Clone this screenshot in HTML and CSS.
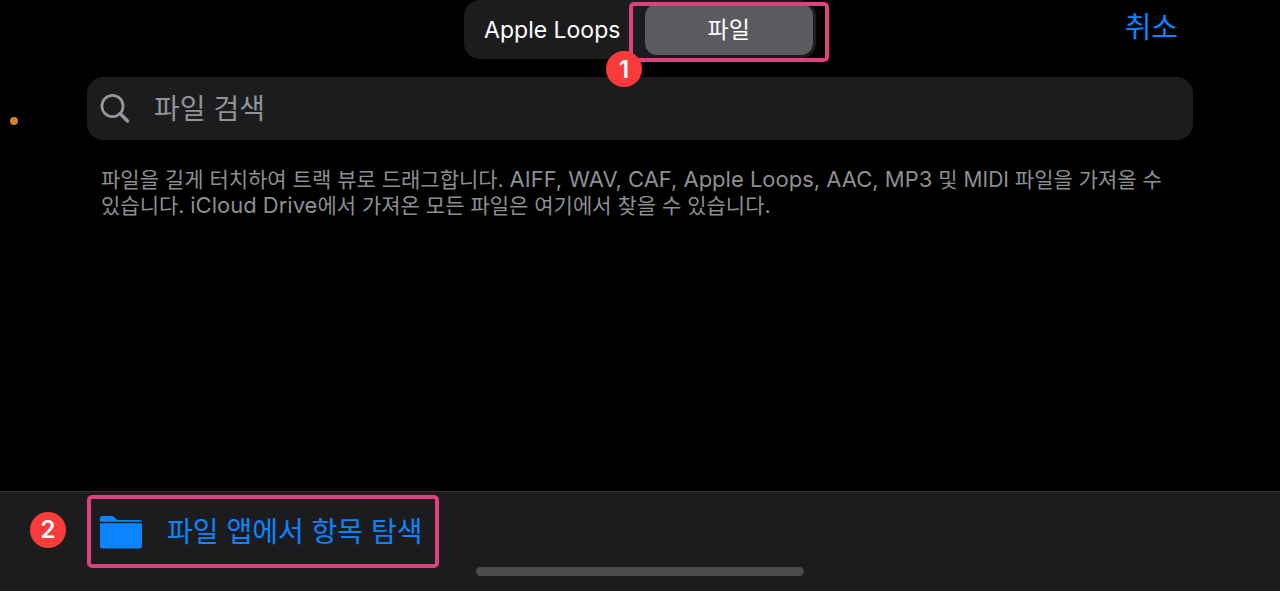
FILE: index.html
```html
<!DOCTYPE html>
<html lang="ko">
<head>
<meta charset="utf-8">
<meta name="viewport" content="width=device-width, initial-scale=1">
<title>파일</title>
<link rel="stylesheet" href="styles.css">
</head>
<body>
<header class="topbar">
  <div class="segments">
    <button class="segment" type="button" aria-pressed="false">Apple Loops</button>
    <button class="segment segment-active" type="button" aria-pressed="true">파일</button>
    <span class="highlight highlight-tab"></span>
    <span class="badge badge-tab">1</span>
  </div>
  <button class="cancel" type="button">취소</button>
</header>
<main class="content">
  <label class="search">
    <svg class="search-icon" viewBox="0 0 30 30" aria-hidden="true">
      <circle cx="12.500" cy="12" r="10.600" fill="none" stroke="currentColor" stroke-width="2.700"/>
      <path d="M20.300 19.800 27.500 27" stroke="currentColor" stroke-width="3.500" stroke-linecap="round"/>
    </svg>
    <input class="search-input" type="search" placeholder="파일 검색" aria-label="파일 검색">
  </label>
  <span class="status-dot"></span>
  <p class="hint">파일을 길게 터치하여 트랙 뷰로 드래그합니다. <span class="latin">AIFF, WAV, CAF, Apple Loops, AAC, MP3</span> 및 MIDI 파일을 가져올 수 있습니다. <span class="latin">iCloud Drive</span>에서 가져온 모든 파일은 여기에서 찾을 수 있습니다.</p>
</main>
<footer class="bottombar">
  <div class="browse-row">
    <span class="badge badge-browse">2</span>
    <button class="browse" type="button">
      <svg class="folder-icon" viewBox="0 0 44 34" aria-hidden="true">
        <path d="M1 6.800V3Q1 1 3 1H12.500Q14 1 15 2L17 4Q18 5 19.500 5H41Q43 5 43 6.800Z" fill="currentColor"/>
        <path d="M1 8.200H43V31Q43 33.500 40.500 33.500H3.500Q1 33.500 1 31Z" fill="currentColor"/>
      </svg>
      <span class="browse-label">파일 앱에서 항목 탐색</span>
    </button>
  </div>
  <div class="home-indicator"></div>
</footer>
</body>
</html>
```
FILE: styles.css
```css
* {
  box-sizing: border-box;
}

body {
  margin: 0;
  min-height: 100vh;
  display: flex;
  flex-direction: column;
  background: #000;
  color: #fff;
  font-family: Inter, "Noto Sans CJK KR", sans-serif;
}

button {
  border: 0;
  background: none;
  color: inherit;
  font: inherit;
  padding: 0;
  cursor: pointer;
}

.topbar {
  display: grid;
  grid-template-columns: 1fr 352px 1fr;
  padding: 0 102px;
}

.segments {
  grid-column: 2;
  position: relative;
  display: grid;
  grid-template-columns: 1fr 1fr;
  height: 59px;
  padding: 4px 3px 4px 4px;
  gap: 8px;
  border-radius: 16px;
  background: #1c1c1e;
  font-size: 23px;
}

.segment {
  border-radius: 12px;
  white-space: nowrap;
}

.segment-active {
  padding-bottom: 4px;
  background: #5b5b5f;
}

.highlight {
  position: absolute;
  border: 4px solid #df4080;
  border-radius: 5px;
  pointer-events: none;
}

.highlight-tab {
  top: 2px;
  right: -13px;
  width: 200px;
  height: 60px;
}

.badge {
  display: flex;
  align-items: center;
  justify-content: center;
  width: 36px;
  height: 36px;
  border-radius: 50%;
  background: #f93b3b;
  color: #fff;
  font-size: 24px;
  font-weight: 600;
}

.badge-tab {
  position: absolute;
  top: 51px;
  left: 142px;
  z-index: 1;
}

.badge-browse {
  margin-bottom: 4px;
}

.cancel {
  justify-self: end;
  align-self: start;
  color: #0a84ff;
  font-size: 29px;
  line-height: 56px;
}

.content {
  position: relative;
  flex: 1;
  padding: 18px 87px 0;
}

.search {
  display: flex;
  align-items: center;
  gap: 24px;
  height: 63px;
  padding: 0 13px;
  border-radius: 16px;
  background: #1c1c1e;
  color: #98989c;
}

.search-icon {
  flex: none;
  width: 30px;
  height: 30px;
}

.search-input {
  flex: 1;
  min-width: 0;
  padding: 0;
  border: 0;
  outline: 0;
  background: none;
  color: #fff;
  font: inherit;
  font-size: 28px;
}

.search-input::placeholder {
  color: #929297;
  opacity: 1;
}

.status-dot {
  position: absolute;
  top: 58px;
  left: 10px;
  width: 8px;
  height: 8px;
  border-radius: 50%;
  background: #d18420;
}

.hint {
  margin: 27px 14px;
  color: #8e8e93;
  font-size: 21px;
  line-height: 26px;
  word-break: keep-all;
}

.latin {
  font-family: Inter, sans-serif;
  font-size: 22px;
  line-height: 22px;
}

.bottombar {
  display: flex;
  flex-direction: column;
  padding: 3px 30px 15px;
  border-top: 1px solid #353537;
  background: #1c1c1e;
}

.browse-row {
  display: flex;
  align-items: center;
  gap: 21px;
}

.browse {
  display: flex;
  align-items: center;
  gap: 24px;
  height: 73px;
  padding: 0 13px 0 8px;
  border: 4px solid #df4080;
  border-radius: 5px;
  color: #0a84ff;
  font-size: 28px;
  white-space: nowrap;
}

.browse-label {
  padding-bottom: 4px;
}

.folder-icon {
  width: 44px;
  height: 34px;
}

.home-indicator {
  align-self: center;
  width: 328px;
  height: 9px;
  margin-top: -1px;
  border-radius: 5px;
  background: #4b4b4d;
}
```
